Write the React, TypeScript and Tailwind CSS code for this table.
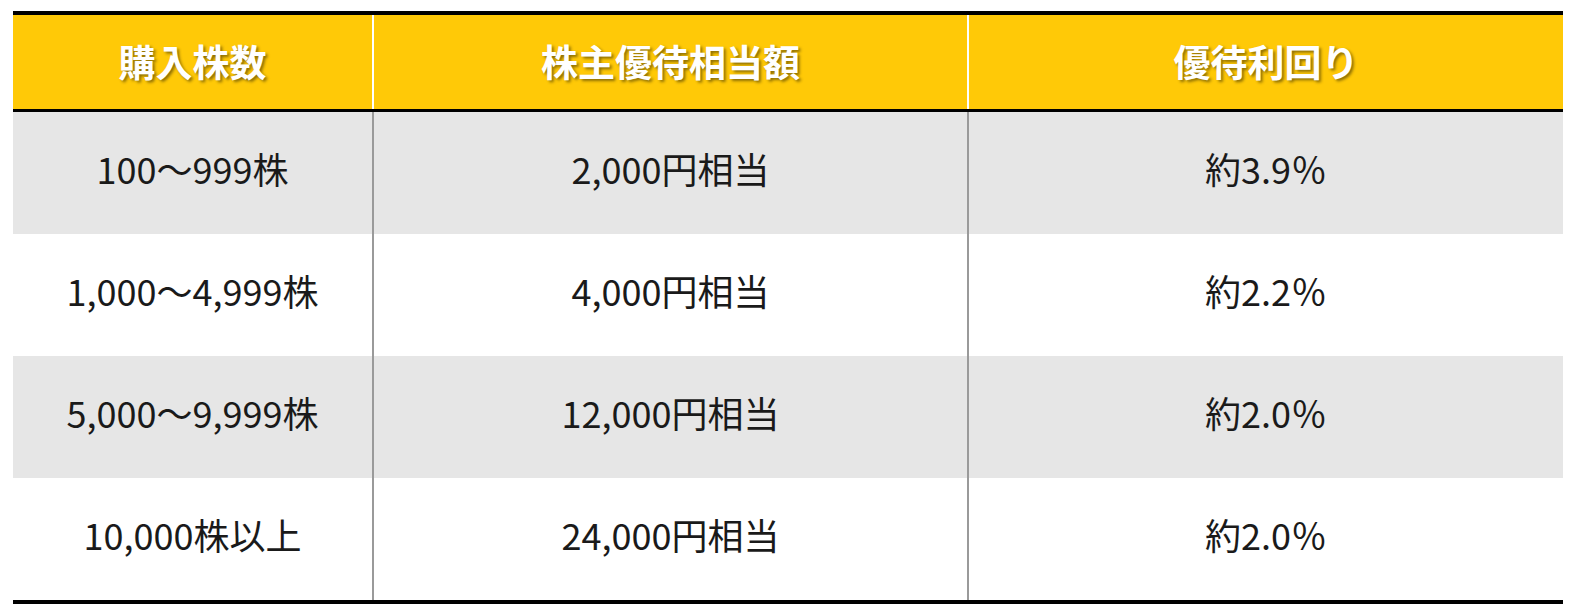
import React from "react";

const rows = [
  ["100～999株", "2,000円相当", "約3.9％"],
  ["1,000～4,999株", "4,000円相当", "約2.2％"],
  ["5,000～9,999株", "12,000円相当", "約2.0％"],
  ["10,000株以上", "24,000円相当", "約2.0％"],
];

const headers = ["購入株数", "株主優待相当額", "優待利回り"];

export default function App() {
  return (
    <div
      className="w-[1575px] h-[616px] bg-white pt-[11px] pl-[13px]"
      style={{ fontFamily: '"Noto Sans CJK JP", "Noto Sans", sans-serif' }}
    >
      <div className="w-[1550px] border-t-[4px] border-b-[4px] border-black">
        <div className="grid grid-cols-[359px_595px_596px] h-[97px] bg-[#ffc907] border-b-[3px] border-black">
          {headers.map((h, i) => (
            <div
              key={h}
              className={`flex items-center justify-center text-white font-bold text-[37px] leading-none pb-[2px] ${
                i > 0 ? "border-l-[2px] border-white" : ""
              }`}
              style={{ textShadow: "2px 2px 3px rgba(0,0,0,0.45)" }}
            >
              {h}
            </div>
          ))}
        </div>
        {rows.map((r, ri) => (
          <div
            key={ri}
            className={`grid grid-cols-[359px_595px_596px] h-[122px] ${
              ri % 2 === 0 ? "bg-[#e6e6e6]" : "bg-white"
            }`}
          >
            {r.map((c, ci) => (
              <div
                key={ci}
                className={`flex items-center justify-center text-[36px] leading-none pb-[10px] text-[#1a1a1a] ${
                  ci > 0 ? "border-l-[2px] border-[#9a9a9a]" : ""
                }`}
              >
                {c}
              </div>
            ))}
          </div>
        ))}
      </div>
    </div>
  );
}
